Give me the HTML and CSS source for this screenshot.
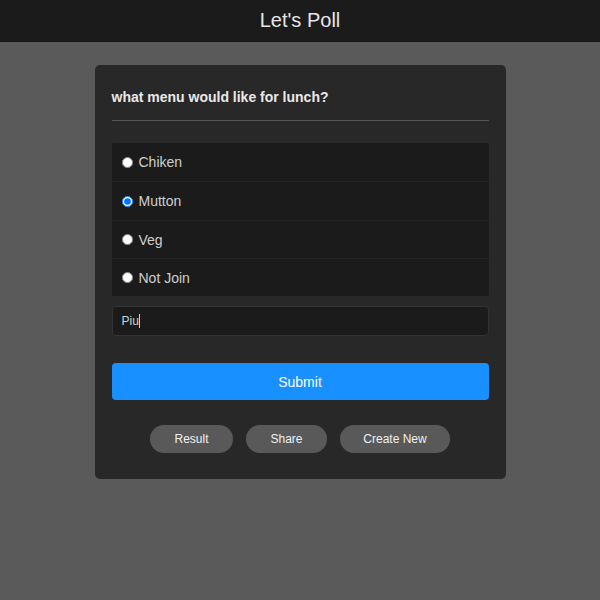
FILE: index.html
```html
<!DOCTYPE html>
<html>
<head>
<meta charset="utf-8">
<link rel="stylesheet" href="styles.css">
</head>
<body>
<header class="topbar">Let's Poll</header>
<main class="page">
  <section class="card">
    <h2 class="question">what menu would like for lunch?</h2>
    <hr class="divider">
    <div class="options">
      <label class="option"><input type="radio" name="m"><span>Chiken</span></label>
      <label class="option option-tall"><input type="radio" name="m" checked><span>Mutton</span></label>
      <label class="option"><input type="radio" name="m"><span>Veg</span></label>
      <label class="option"><input type="radio" name="m"><span>Not Join</span></label>
    </div>
    <div class="name-field"><span class="name-text">Piu</span><span class="caret"></span></div>
    <button class="submit">Submit</button>
    <div class="actions">
      <button class="pill pill-result">Result</button>
      <button class="pill pill-share">Share</button>
      <button class="pill pill-new">Create New</button>
    </div>
  </section>
</main>
</body>
</html>
```
FILE: styles.css
```css
html, body {
  margin: 0;
  padding: 0;
}
body {
  background: #5a5a5a;
  font-family: "Liberation Sans", Arial, sans-serif;
  height: 600px;
}
.topbar {
  height: 42px;
  background: #1b1b1b;
  border-bottom: 1px solid #161616;
  box-sizing: border-box;
  color: #e6e6e6;
  font-size: 20px;
  display: flex;
  align-items: center;
  justify-content: center;
}
.page {
  display: flex;
  justify-content: center;
  padding-top: 23px;
}
.card {
  width: 411px;
  box-sizing: border-box;
  background: #282828;
  border-radius: 5px;
  padding: 22px 17px 26px 17px;
}
.question {
  margin: 0;
  font-size: 14px;
  font-weight: bold;
  color: #e8e8e8;
  line-height: 20px;
}
.divider {
  border: 0;
  border-top: 1px solid #555;
  margin: 13px 0 22px 0;
}
.options {
  background: #1b1b1b;
  border-radius: 2px;
}
.option {
  display: flex;
  align-items: center;
  height: 38px;
  padding-left: 10px;
  box-sizing: border-box;
  border-top: 1px solid #262626;
  color: #cfcfcf;
  font-size: 14px;
}
.option:first-child {
  border-top: 0;
}
.option-tall {
  height: 39px;
}
.option input {
  margin: 0 6px 0 0;
  width: 11px;
  height: 11px;
}
.name-field {
  margin-top: 10px;
  height: 30px;
  box-sizing: border-box;
  background: #1b1b1b;
  border: 1px solid #333;
  border-radius: 4px;
  display: flex;
  align-items: center;
  padding-left: 9px;
  color: #d0d0d0;
  font-size: 12px;
}
.caret {
  display: inline-block;
  width: 1px;
  height: 14px;
  background: #d0d0d0;
}
.submit {
  display: block;
  width: 100%;
  margin-top: 27px;
  height: 37px;
  border: 0;
  border-radius: 4px;
  background: #1890ff;
  color: #fff;
  font-family: inherit;
  font-size: 14px;
}
.actions {
  margin-top: 25px;
  display: flex;
  justify-content: center;
  gap: 13px;
}
.pill {
  height: 28px;
  border: 0;
  border-radius: 14px;
  background: #595959;
  color: #f0f0f0;
  font-family: inherit;
  font-size: 12px;
  padding: 0;
}
.pill-result { width: 83px; }
.pill-share { width: 81px; }
.pill-new { width: 110px; }
```
